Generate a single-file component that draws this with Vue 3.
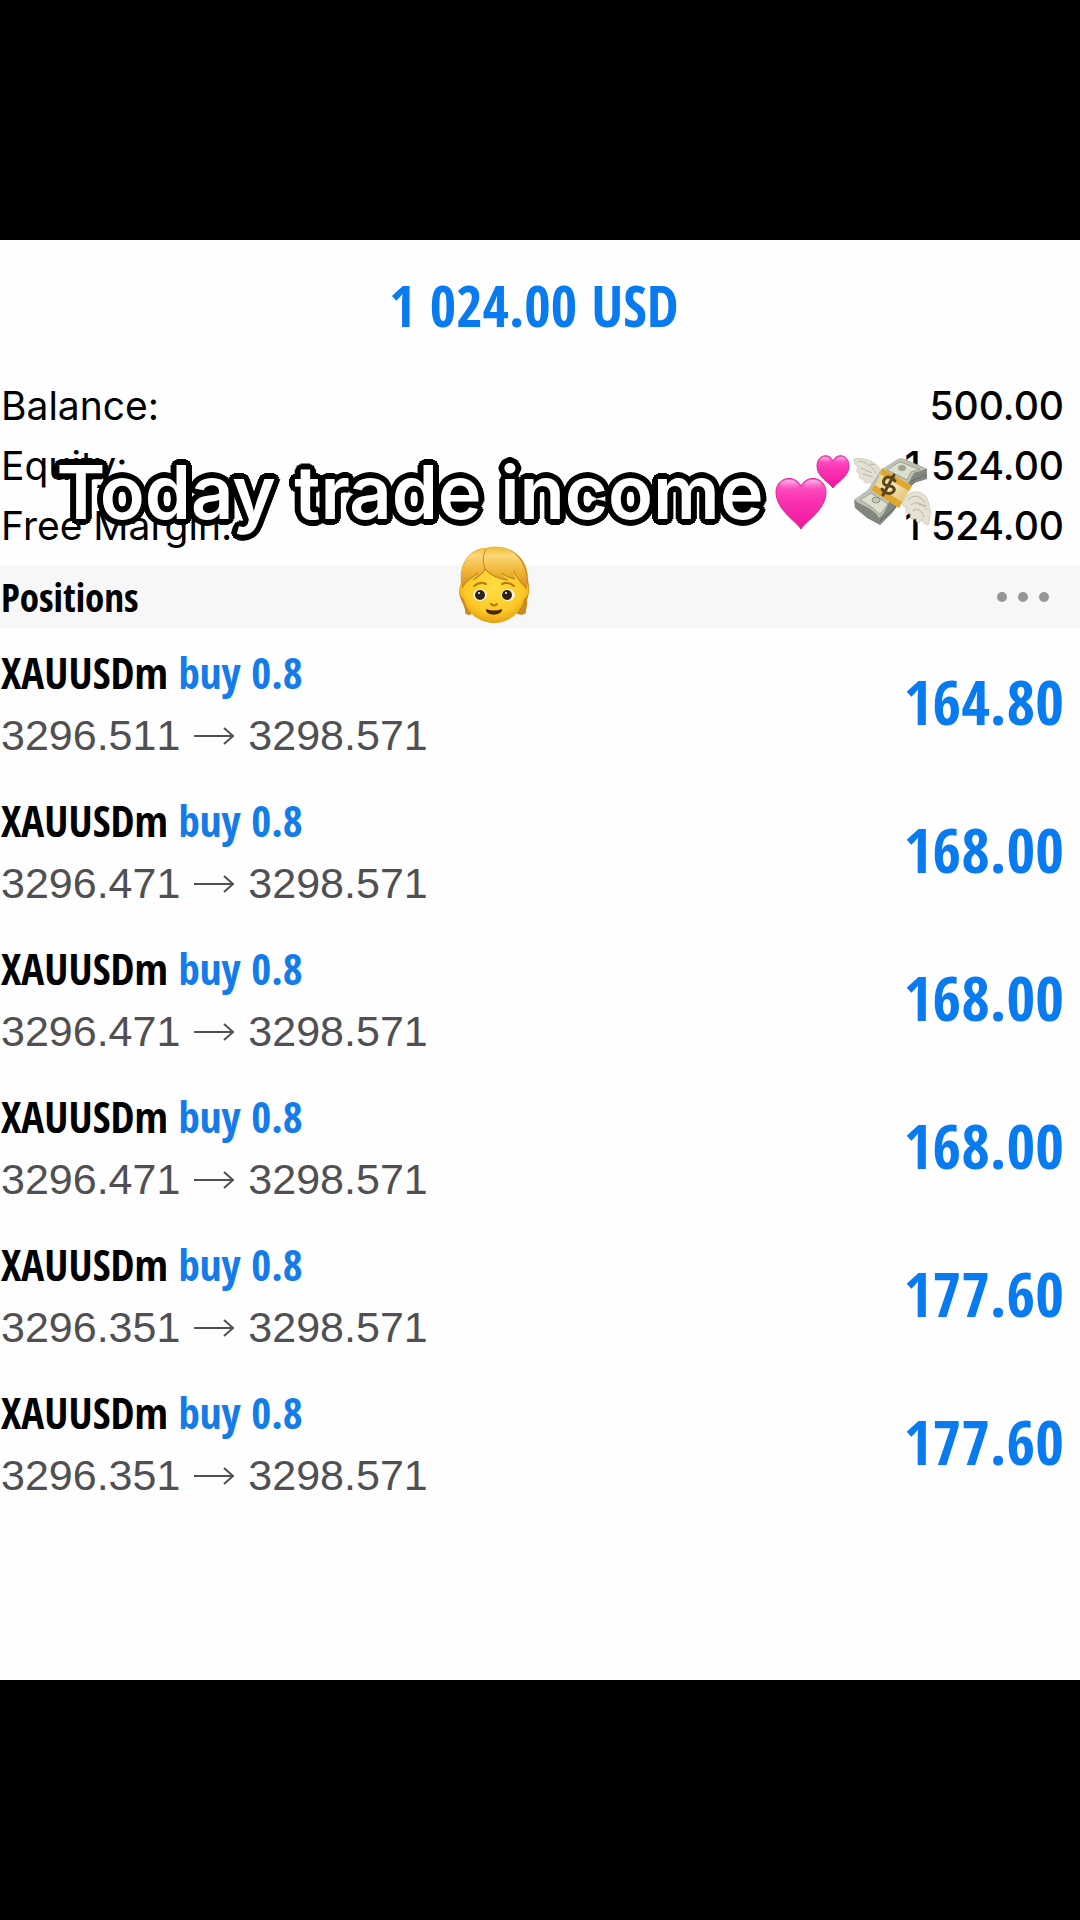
<template>
  <div class="screen">
    <main class="account">
      <h1 class="profit">1 024.00 USD</h1>

      <section class="top">
        <dl class="summary">
          <div v-for="item in summary" :key="item.label" class="summary-row">
            <dt>{{ item.label }}</dt>
            <dd>{{ item.value }}</dd>
          </div>
        </dl>

        <div class="caption">
          <div class="caption-line">
            <span class="caption-text">Today trade income</span>
            <svg class="hearts" viewBox="0 0 78 78" aria-hidden="true">
              <defs>
                <linearGradient id="pink" x1="0" y1="0" x2="0" y2="1">
                  <stop offset="0" stop-color="#fb63c8" />
                  <stop offset="0.4" stop-color="#fb35b4" />
                  <stop offset="1" stop-color="#ee169b" />
                </linearGradient>
                <linearGradient id="shine" x1="0" y1="0" x2="0" y2="1">
                  <stop offset="0" stop-color="#ffc4ee" stop-opacity="0.9" />
                  <stop offset="1" stop-color="#ff6fce" stop-opacity="0" />
                </linearGradient>
              </defs>
              <g stroke="#d8299a" stroke-width="1">
                <path fill="url(#pink)" d="M26 76C22 69 1 57 1 39C1 25 19 20 26 33C33 20 51 25 51 39C51 57 30 69 26 76Z" />
                <path fill="url(#pink)" d="M58 35C55 30 42 24 42 13C42 2 54 -1 58 8C62 -1 74 2 74 13C74 24 61 30 58 35Z" />
              </g>
              <g fill="url(#shine)">
                <ellipse cx="14" cy="32" rx="9" ry="5" />
                <ellipse cx="38" cy="32" rx="9" ry="5" />
                <ellipse cx="50" cy="7" rx="5" ry="3" />
                <ellipse cx="66" cy="7" rx="5" ry="3" />
              </g>
            </svg>
            <svg class="money" viewBox="0 0 78 70" aria-hidden="true">
              <defs>
                <linearGradient id="band" x1="0" y1="0" x2="1" y2="1">
                  <stop offset="0" stop-color="#e9ce80" />
                  <stop offset="0.5" stop-color="#f3e3ae" />
                  <stop offset="1" stop-color="#d7b65d" />
                </linearGradient>
              </defs>
              <path d="M27 12C23 4 9 0 1 2C1 7 4 10 6 11C2 12 4 17 8 17C4 19 7 23 11 22C10 26 14 27 17 25C19 29 26 28 27 23Z" fill="#e3e0d3" stroke="#d2cec0" />
              <path d="M5 4C13 5 19 9 23 16M8 11L19 16M10 17L20 20M17 7L22 8" fill="none" stroke="#b9b4a4" />
              <!-- stack of notes -->
              <path d="M28 13L42 4C49 -2 54 4 61 6L74 12V22L61 26L54 35L40 55L27 68L14 61L2 51L1 43L15 33Z" fill="#81867f" />
              <path d="M28 13L42 4C49 -2 53 4 60 6L73 12L61 16L56 25L36 45C33 51 32 57 26 61C21 51 9 49 1 43L15 33Z" fill="#bec2b4" />
              <path d="M34 13L46 5C53 6 57 10 67 12L58 15L54 23Z M18 36L35 47C31 51 31 55 26 57C20 50 14 47 7 43Z" fill="#dcdfce" stroke="#9ca195" />
              <ellipse cx="49" cy="11" rx="4" ry="3" fill="#9ca38f" />
              <ellipse cx="23" cy="43" rx="4" ry="3" fill="#c3c8b4" stroke="#8b937f" />
              <path d="M58 24L73 18M52 33L62 25M27 64L45 48" stroke="#636963" fill="none" />
              <path d="M29 11L59 29L46 51L18 33C24 28 26 20 29 11Z" fill="url(#band)" />
              <path d="M29 11L59 29L56 34L27 17ZM22 28L49 45L46 51L18 33Z" fill="#e0a62d" />
              <path d="M42 24C39 19 33 19 31 23C29 27 33 29 36 29C40 29 43 32 40 35C37 38 31 36 29 32M41 18L30 38" fill="none" stroke="#59461c" stroke-width="3" stroke-linecap="round" />
              <path d="M52 42C56 33 68 33 73 40C77 47 79 58 75 68C71 67 70 65 69 62C67 67 63 67 63 61C59 64 56 61 58 57C53 57 51 53 54 50C49 50 48 46 52 42Z" fill="#e5e1d3" stroke="#d2cdbc" />
              <path d="M55 43C61 36 69 40 72 46M58 48C64 43 70 47 74 53M60 54C65 50 69 54 71 60M65 47L74 49" fill="none" stroke="#b9b3a2" />
            </svg>
          </div>
          <svg class="face" viewBox="0 0 72 78" aria-hidden="true">
            <defs>
              <radialGradient id="skin" cx="0.5" cy="0.4" r="0.6">
                <stop offset="0" stop-color="#ffde43" />
                <stop offset="0.7" stop-color="#fcc927" />
                <stop offset="1" stop-color="#e7a112" />
              </radialGradient>
              <linearGradient id="hair" x1="0" y1="0" x2="0" y2="1">
                <stop offset="0" stop-color="#f2b92d" />
                <stop offset="0.2" stop-color="#fbd878" />
                <stop offset="0.6" stop-color="#efb334" />
                <stop offset="1" stop-color="#d08d1c" />
              </linearGradient>
            </defs>
            <path d="M7 67C8 62 4 57 2 51C0 46 2 41 3 36C1 15 14 2 28 2C47 -3 70 7 70 34C72 43 71 49 69 54C70 60 67 65 68 67C64 70 60 69 57 66L15 67C12 70 9 69 7 67Z" fill="#c98a1f" />
            <path d="M5 36C0 37 0 51 6 53C9 68 22 77 36 77C51 77 63 67 66 53C72 51 72 37 67 36C65 20 54 17 36 17C18 17 7 20 5 36Z" fill="url(#skin)" />
            <path d="M4 42C-1 17 13 3 28 2C47 -3 71 8 69 43C66 40 62 36 60 31L56 25C55 29 57 31 57 33C51 32 47 29 44 27C46 31 48 32 50 34C40 33 31 28 27 23C24 29 20 31 15 34L20 27C14 32 7 36 4 42Z" fill="url(#hair)" />
            <path d="M28 3C24 10 25 18 27 23" fill="none" stroke="#c68a20" stroke-width="1" />
            <path d="M50 34C40 33 31 28 27 23C24 29 19 31 15 34M44 27C47 30 52 32 57 33M20 27C13 32 7 36 4 42M56 25C58 31 64 38 68 42" fill="none" stroke="#b47517" stroke-width="1" />
            <path d="M16 40Q22 35 28 38M44 38Q50 35 56 40" fill="none" stroke="#b97b16" stroke-width="2" stroke-linecap="round" />
            <ellipse cx="22" cy="49" rx="7" ry="6" fill="#fff3d3" />
            <ellipse cx="50" cy="49" rx="7" ry="6" fill="#fff3d3" />
            <circle cx="22" cy="49" r="5" fill="#302219" />
            <circle cx="49" cy="49" r="5" fill="#302219" />
            <circle cx="21" cy="47" r="1" fill="#fff" />
            <circle cx="48" cy="47" r="1" fill="#fff" />
            <path d="M33 58Q36 61 39 58" fill="none" stroke="#b57912" stroke-width="2" stroke-linecap="round" />
            <path d="M28 63Q36 66 44 63C45 70 27 71 28 63Z" fill="#4d2511" />
          </svg>
        </div>
      </section>

      <header class="positions-header">
        <h2>Positions</h2>
        <button type="button" class="more" aria-label="More">
          <i></i><i></i><i></i>
        </button>
      </header>

      <ul class="positions">
        <li v-for="(pos, index) in positions" :key="index" class="position">
          <div class="details">
            <div class="symbol">XAUUSDm <span class="side">buy 0.8</span></div>
            <div class="prices">
              <span>{{ pos.open }}</span>
              <svg class="arrow" viewBox="0 0 42 20" aria-label="to">
                <path d="M1 10H40M31 2L40 10L31 18" />
              </svg>
              <span>3298.571</span>
            </div>
          </div>
          <div class="amount">{{ pos.profit }}</div>
        </li>
      </ul>
    </main>
  </div>
</template>

<script setup>
import { ref } from 'vue'

const summary = ref([
  { label: 'Balance:', value: '500.00' },
  { label: 'Equity:', value: '1 524.00' },
  { label: 'Free Margin:', value: '1 524.00' }
])

const positions = ref([
  { open: '3296.511', profit: '164.80' },
  { open: '3296.471', profit: '168.00' },
  { open: '3296.471', profit: '168.00' },
  { open: '3296.471', profit: '168.00' },
  { open: '3296.351', profit: '177.60' },
  { open: '3296.351', profit: '177.60' }
])
</script>

<style>
body {
  margin: 0;
  background: #000;
}
</style>

<style scoped>
.screen {
  box-sizing: border-box;
  min-height: 100vh;
  padding: 12.5vh 0;
  display: flex;
  flex-direction: column;
  background: #000;
  font-family: "Open Sans Condensed", "Noto Sans Condensed", "Roboto Condensed", sans-serif;
}

.account {
  flex: 1;
  background: #fefefe;
  color: #000;
}

.profit {
  margin: 0;
  padding: 0 12px 6px 0;
  font-size: 57px;
  line-height: 130px;
  text-align: center;
  color: #087bf0;
}

.top {
  position: relative;
}

.summary {
  margin: 0;
  padding: 0 16px 9px 1px;
  font-family: Inter, sans-serif;
  font-size: 39px;
  line-height: 60px;
}

.summary-row {
  display: flex;
  justify-content: space-between;
}

.summary dd {
  margin: 0;
  font-weight: 500;
}

/* caption lies over the summary and the list header */
.caption {
  position: absolute;
  z-index: 1;
  top: 70px;
  left: 0;
  right: 92px;
  display: flex;
  flex-direction: column;
  align-items: center;
}

.caption-line {
  display: flex;
  align-items: center;
  height: 92px;
}

.caption-text {
  margin-right: 12px;
  font-family: Inter, sans-serif;
  font-size: 74px;
  font-weight: 600;
  white-space: nowrap;
  color: #fff;
  text-shadow:
    6px 0 #000, -6px 0 #000, 0 6px #000, 0 -6px #000,
    4px 4px #000, -4px 4px #000, 4px -4px #000, -4px -4px #000,
    5px 2px #000, -5px 2px #000, 5px -2px #000, -5px -2px #000,
    2px 5px #000, -2px 5px #000, 2px -5px #000, -2px -5px #000,
    3px 0 #000, -3px 0 #000, 0 3px #000, 0 -3px #000;
}

.hearts {
  width: 78px;
  height: 78px;
}

.money {
  width: 78px;
  height: 70px;
}

.face {
  width: 72px;
  height: 78px;
  margin-top: 8px;
}

.positions-header {
  display: flex;
  align-items: center;
  justify-content: space-between;
  padding: 0 31px 0 1px;
  background: #f7f7f7;
}

.positions-header h2 {
  margin: 0;
  font-size: 39px;
  line-height: 63px;
}

.more {
  display: flex;
  gap: 11px;
  padding: 10px 0;
  border: none;
  background: none;
  cursor: pointer;
}

.more i {
  width: 10px;
  height: 10px;
  border-radius: 50%;
  background: #969696;
}

.positions {
  margin: 0;
  padding: 0;
  list-style: none;
}

.position {
  display: flex;
  align-items: center;
  justify-content: space-between;
  padding: 16px 16px 10px 1px;
}

.symbol {
  padding-bottom: 4px;
  font-size: 43px;
  font-weight: bold;
  line-height: 57px;
}

.side {
  color: #147ce8;
}

.prices {
  display: flex;
  align-items: center;
  gap: 13px;
  font-family: "Liberation Sans", Arial, sans-serif;
  font-size: 43px;
  font-kerning: none;
  line-height: 61px;
  color: #505052;
}

.arrow {
  width: 42px;
  height: 20px;
  fill: none;
  stroke: currentColor;
  stroke-width: 2;
}

.amount {
  padding-bottom: 8px;
  font-size: 62px;
  font-weight: bold;
  line-height: 60px;
  color: #087bf0;
}
</style>
